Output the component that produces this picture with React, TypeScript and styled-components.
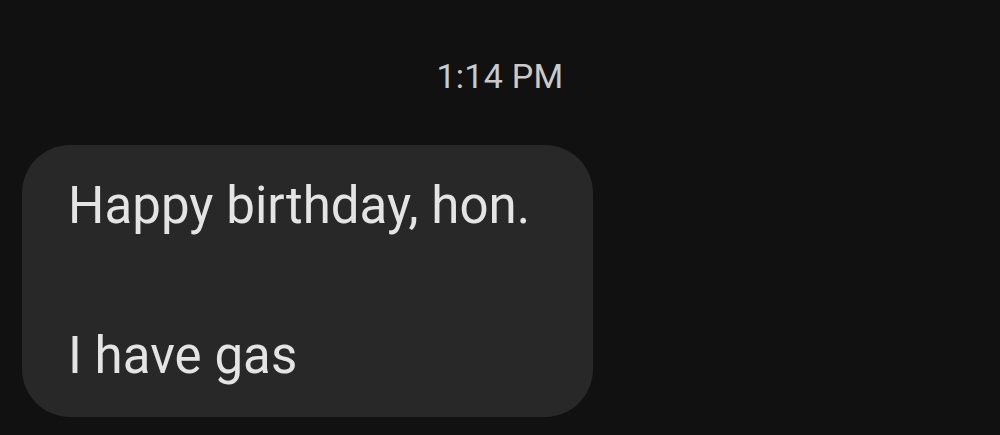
import styled, { createGlobalStyle } from "styled-components";

const GlobalStyle = createGlobalStyle`
  html, body {
    margin: 0;
    padding: 0;
    background: #111111;
  }
  body {
    font-family: Roboto, "Noto Sans", sans-serif;
  }
`;

type Message = {
  lines: string[];
};

const message: Message = {
  lines: ["Happy birthday, hon.", "", "I have gas"],
};

const App = () => {
  return (
    <>
      <GlobalStyle />
      <Thread>
        <Timestamp>1:14 PM</Timestamp>
        <Bubble>
          {message.lines.map((line, i) => (
            <Line key={i}>{line || "\u00a0"}</Line>
          ))}
        </Bubble>
      </Thread>
    </>
  );
};

export default App;

const Thread = styled.div`
  width: 1000px;
  height: 435px;
  box-sizing: border-box;
  padding: 54px 0 0 22px;
  display: flex;
  flex-direction: column;
  align-items: flex-start;
  overflow: hidden;
`;

const Timestamp = styled.div`
  align-self: center;
  margin-left: -22px;
  font-size: 34px;
  line-height: 44px;
  color: #cacaca;
  letter-spacing: 0.3px;
`;

const Bubble = styled.div`
  margin-top: 47px;
  width: 571px;
  height: 272px;
  box-sizing: border-box;
  padding: 23px 40px 0 46px;
  background: #282828;
  border-radius: 48px;
  display: flex;
  flex-direction: column;
`;

const Line = styled.div`
  font-size: 51px;
  line-height: 75px;
  color: #e4e4e4;
  letter-spacing: 0.05px;
  white-space: pre;
`;
